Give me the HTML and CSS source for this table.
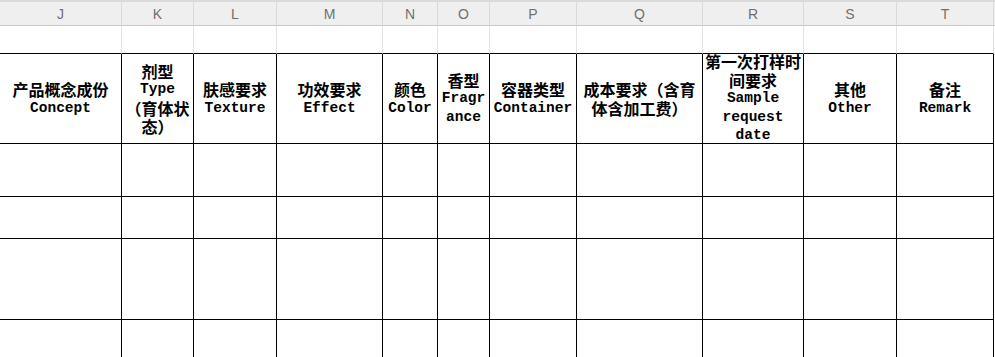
FILE: index.html
```
<!DOCTYPE html>
<html lang="zh-CN">
<head>
<meta charset="utf-8">
<title>样品开发需求表</title>
<link rel="stylesheet" href="styles.css">
</head>
<body>
<div class="sheet">
  <!-- column letters -->
  <div class="colhead">J</div>
  <div class="colhead">K</div>
  <div class="colhead">L</div>
  <div class="colhead">M</div>
  <div class="colhead">N</div>
  <div class="colhead">O</div>
  <div class="colhead">P</div>
  <div class="colhead">Q</div>
  <div class="colhead">R</div>
  <div class="colhead">S</div>
  <div class="colhead">T</div>
  <div class="colhead last"></div>

  <!-- blank row above the table -->
  <div class="blank"></div><div class="blank"></div><div class="blank"></div><div class="blank"></div>
  <div class="blank"></div><div class="blank"></div><div class="blank"></div><div class="blank"></div>
  <div class="blank"></div><div class="blank"></div><div class="blank"></div><div class="blank last"></div>

  <!-- table header -->
  <div class="cell head"><span class="zh">产品概念成份</span><span class="en">Concept</span></div>
  <div class="cell head"><span class="zh">剂型</span><span class="en">Type</span><span class="zh">（育体状</span><span class="zh">态）</span></div>
  <div class="cell head"><span class="zh">肤感要求</span><span class="en">Texture</span></div>
  <div class="cell head"><span class="zh">功效要求</span><span class="en">Effect</span></div>
  <div class="cell head"><span class="zh">颜色</span><span class="en">Color</span></div>
  <div class="cell head"><span class="zh">香型</span><span class="en">Fragr</span><span class="en">ance</span></div>
  <div class="cell head"><span class="zh">容器类型</span><span class="en">Container</span></div>
  <div class="cell head"><span class="zh">成本要求（含育</span><span class="zh">体含加工费）</span></div>
  <div class="cell head"><span class="zh">第一次打样时</span><span class="zh">间要求</span><span class="en">Sample</span><span class="en">request</span><span class="en">date</span></div>
  <div class="cell head"><span class="zh">其他</span><span class="en">Other</span></div>
  <div class="cell head"><span class="zh">备注</span><span class="en">Remark</span></div>
  <div class="cell outside"></div>

  <!-- empty entry rows -->
  <div class="cell"></div><div class="cell"></div><div class="cell"></div><div class="cell"></div>
  <div class="cell"></div><div class="cell"></div><div class="cell"></div><div class="cell"></div>
  <div class="cell"></div><div class="cell"></div><div class="cell"></div><div class="cell outside"></div>

  <div class="cell"></div><div class="cell"></div><div class="cell"></div><div class="cell"></div>
  <div class="cell"></div><div class="cell"></div><div class="cell"></div><div class="cell"></div>
  <div class="cell"></div><div class="cell"></div><div class="cell"></div><div class="cell outside"></div>

  <div class="cell"></div><div class="cell"></div><div class="cell"></div><div class="cell"></div>
  <div class="cell"></div><div class="cell"></div><div class="cell"></div><div class="cell"></div>
  <div class="cell"></div><div class="cell"></div><div class="cell"></div><div class="cell outside"></div>

  <div class="cell"></div><div class="cell"></div><div class="cell"></div><div class="cell"></div>
  <div class="cell"></div><div class="cell"></div><div class="cell"></div><div class="cell"></div>
  <div class="cell"></div><div class="cell"></div><div class="cell"></div><div class="cell outside"></div>
</div>
</body>
</html>
```

FILE: styles.css
```
html, body {
  margin: 0;
  padding: 0;
  background: #ffffff;
  overflow: hidden;
}

.sheet {
  display: grid;
  grid-template-columns: 122px 72px 83px 106px 55px 52px 87px 126px 101px 93px 97px 1fr;
  grid-template-rows: 26px 28px 90px 53px 42px 81px 60px;
  width: 995px;
}

.sheet > div {
  box-sizing: border-box;
  min-width: 0;
}

/* column letter bar */
.colhead {
  background: #efefef;
  border-top: 2px solid #dadada;
  border-bottom: 1px solid #c9c9c9;
  border-right: 1px solid #d9d9d9;
  color: #707070;
  font-family: "Liberation Sans", "DejaVu Sans", sans-serif;
  font-size: 14px;
  display: flex;
  align-items: center;
  justify-content: center;
  padding-top: 1px;
}

.colhead.last {
  border-right: none;
}

/* plain row above the bordered table */
.blank {
  border-right: 1px solid #e3e3e3;
  border-bottom: 1px solid #000000;
}

.blank.last {
  border-right: none;
  border-bottom: none;
}

/* bordered table cells */
.cell {
  border-right: 1px solid #000000;
  border-bottom: 1px solid #000000;
}

.cell.outside {
  border: none;
}

.head {
  display: flex;
  flex-direction: column;
  align-items: center;
  justify-content: center;
  overflow: visible;
  white-space: nowrap;
  color: #000000;
  font-weight: 700;
  line-height: 18.5px;
}

.zh {
  font-family: "Noto Sans CJK SC", "Liberation Mono", sans-serif;
  font-size: 16px;
  font-weight: 700;
}

.en {
  font-family: "Liberation Mono", "DejaVu Sans Mono", monospace;
  font-size: 14.5px;
  font-weight: 700;
}
```
